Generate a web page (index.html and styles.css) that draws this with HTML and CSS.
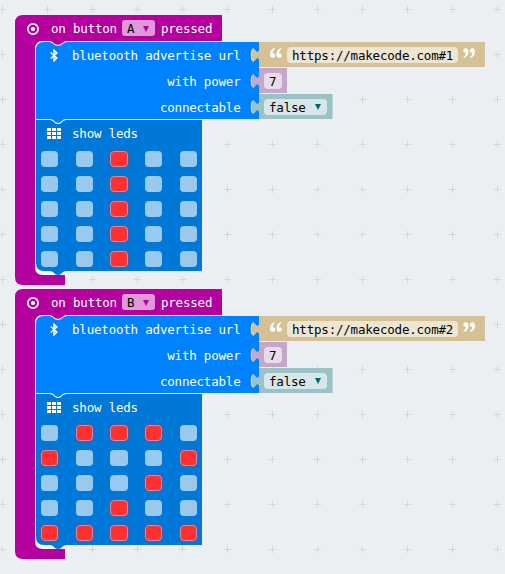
FILE: index.html
```
<!DOCTYPE html>
<html lang="en">
<head>
<meta charset="utf-8">
<title>Button blocks</title>
<link rel="stylesheet" href="styles.css">
</head>
<body>
<svg class="defs" width="0" height="0">
  <defs>
    <symbol id="shape" viewBox="0 0 250 270">
      <path fill="#f8fafb" d="M20 245V253Q20 261 28 261H43L36 255Z"/>
      <path fill="#b4009e" d="M8 0H207V26H52C48 26 47 30 43 30C39 30 38 26 34 26H28Q20 26 20 34V252Q20 260 28 260H50V270H8Q0 270 0 262V8Q0 0 8 0Z"/>
      <path fill="none" stroke="#f4e8f6" d="M20.500 252V34.500Q20.500 26.500 28.500 26.500H34C38 26.500 39 30.500 43 30.500C47 30.500 48 26.500 52 26.500H207"/>
      <path fill="#0082ff" d="M29 27H34C38 27 39 31 43 31C47 31 48 27 52 27H244V104H51C47 104 47 108 43 108C39 108 39 104 35 104H21V35Q21 27 29 27Z"/>
      <path fill="#0078d7" d="M21 105H35C39 105 39 109 43 109C47 109 47 105 51 105H187V256H51C47 256 47 260 43 260C39 260 39 256 35 256H29Q21 256 21 248Z"/>
      <path fill="none" stroke="#e5f2ff" d="M21 104.500H35C39 104.500 39 108.500 43 108.500C47 108.500 47 104.500 51 104.500H244"/>
    </symbol>
    <symbol id="target" viewBox="0 0 12 12">
      <circle cx="6" cy="6" r="5.150" fill="none" stroke="#fff" stroke-width="1.700"/>
      <circle cx="6" cy="6" r="2.100" fill="#fff"/>
    </symbol>
    <symbol id="bluetooth" viewBox="0 0 8 13">
      <path d="M.7 3.500 6.800 9 4 11.800V1.200L6.800 4 .7 9.500" fill="none" stroke="#fff" stroke-width="1.500"/>
    </symbol>
    <symbol id="matrix" viewBox="0 0 14 11">
      <path fill="#fff" d="M0 0h4v3H0zM5 0h4v3H5zM10 0h4v3h-4zM0 4h4v3H0zM5 4h4v3H5zM10 4h4v3h-4zM0 8h4v3H0zM5 8h4v3H5zM10 8h4v3h-4z"/>
    </symbol>
    <symbol id="plug" viewBox="0 0 9 14">
      <path fill="currentColor" d="M9 2.500L7 4Q5 1 3 .5Q1 2 1 7Q1 12 3 13.500Q5 13 7 10L9 11.500Z"/>
      <path fill="none" stroke="#fff" stroke-opacity=".6" d="M4 .8Q1.200 0 1.200 7Q1.200 14 4 13.200"/>
    </symbol>
    <symbol id="quote" viewBox="0 0 12 10">
      <path fill="#fff" d="M4.800 0C2 .7 0 3 0 6.200C0 8.500 1 9.800 2.800 9.800C4.200 9.800 5.200 8.900 5.200 7.400C5.200 6 4.200 5.100 2.700 5.200C2.600 3.500 3.500 1.800 5 .8ZM11.300 0C8.500 .7 6.500 3 6.500 6.200C6.500 8.500 7.500 9.800 9.300 9.800C10.700 9.800 11.700 8.900 11.700 7.400C11.700 6 10.700 5.100 9.200 5.200C9.100 3.500 10 1.800 11.500 .8Z"/>
    </symbol>
    <symbol id="arrow" viewBox="0 0 6 6"><path fill="currentColor" d="M0 0H6L3 6Z"/></symbol>
  </defs>
</svg>
<main class="workspace">
  <section class="event">
    <svg class="shape"><use href="#shape"/></svg>
    <header class="head">
      <svg class="target"><use href="#target"/></svg>
      <span>on button</span>
      <span class="pick">A<svg class="arrow"><use href="#arrow"/></svg></span>
      <span>pressed</span>
    </header>
    <div class="advertise">
      <div class="row">
        <div class="label"><svg class="bluetooth"><use href="#bluetooth"/></svg>bluetooth advertise url</div>
        <div class="value text"><svg class="plug"><use href="#plug"/></svg><svg class="quote"><use href="#quote"/></svg><span class="field">https://makecode.com#1</span><svg class="quote close"><use href="#quote"/></svg></div>
      </div>
      <div class="row">
        <div class="label">with power</div>
        <div class="value number"><svg class="plug"><use href="#plug"/></svg><span class="field">7</span></div>
      </div>
      <div class="row">
        <div class="label">connectable</div>
        <div class="value logic"><svg class="plug"><use href="#plug"/></svg><span class="field">false<svg class="arrow"><use href="#arrow"/></svg></span></div>
      </div>
    </div>
    <div class="show"><svg class="matrix"><use href="#matrix"/></svg>show leds</div>
    <div class="leds">
      <i></i><i></i><i class="on"></i><i></i><i></i>
      <i></i><i></i><i class="on"></i><i></i><i></i>
      <i></i><i></i><i class="on"></i><i></i><i></i>
      <i></i><i></i><i class="on"></i><i></i><i></i>
      <i></i><i></i><i class="on"></i><i></i><i></i>
    </div>
  </section>
  <section class="event">
    <svg class="shape"><use href="#shape"/></svg>
    <header class="head">
      <svg class="target"><use href="#target"/></svg>
      <span>on button</span>
      <span class="pick">B<svg class="arrow"><use href="#arrow"/></svg></span>
      <span>pressed</span>
    </header>
    <div class="advertise">
      <div class="row">
        <div class="label"><svg class="bluetooth"><use href="#bluetooth"/></svg>bluetooth advertise url</div>
        <div class="value text"><svg class="plug"><use href="#plug"/></svg><svg class="quote"><use href="#quote"/></svg><span class="field">https://makecode.com#2</span><svg class="quote close"><use href="#quote"/></svg></div>
      </div>
      <div class="row">
        <div class="label">with power</div>
        <div class="value number"><svg class="plug"><use href="#plug"/></svg><span class="field">7</span></div>
      </div>
      <div class="row">
        <div class="label">connectable</div>
        <div class="value logic"><svg class="plug"><use href="#plug"/></svg><span class="field">false<svg class="arrow"><use href="#arrow"/></svg></span></div>
      </div>
    </div>
    <div class="show"><svg class="matrix"><use href="#matrix"/></svg>show leds</div>
    <div class="leds">
      <i></i><i class="on"></i><i class="on"></i><i class="on"></i><i></i>
      <i class="on"></i><i></i><i></i><i></i><i class="on"></i>
      <i></i><i></i><i></i><i class="on"></i><i></i>
      <i></i><i></i><i class="on"></i><i></i><i></i>
      <i class="on"></i><i class="on"></i><i class="on"></i><i class="on"></i><i class="on"></i>
    </div>
  </section>
</main>
</body>
</html>
```
FILE: styles.css
```
* { box-sizing: border-box; }
body {
  margin: 0;
  background: #ebeff1;
  font: 12.5px/16px "DejaVu Sans Mono", "Liberation Mono", monospace;
  letter-spacing: -0.2px;
  color: #fff;
}
svg { display: block; flex: none; }
.defs { position: absolute; }
.workspace {
  height: 574px;
  padding: 15px 0 0 15px;
  overflow: hidden;
  background: url("data:image/svg+xml,%3Csvg xmlns='http://www.w3.org/2000/svg' width='45' height='45'%3E%3Cpath d='M0 9.500H6M2.500 6V13M44 9.500H45' stroke='%23d3d8da' fill='none'/%3E%3C/svg%3E");
}
.event { position: relative; z-index: 0; width: 475px; height: 270px; margin-bottom: 4px; }
.shape { position: absolute; left: 0; top: 0; width: 250px; height: 270px; z-index: -1; }
.head { display: flex; align-items: center; height: 26px; padding: 1px 0 0 12px; white-space: nowrap; }
.target { width: 12px; height: 12px; margin-right: 12px; }
.pick {
  display: flex;
  align-items: center;
  width: 33px;
  height: 16px;
  margin: -1px 6px 0 5px;
  padding: 1px 0 0 5px;
  border-radius: 3px;
  background: #e199d8;
  color: #000;
}
.arrow { width: 6px; height: 6px; }
.pick .arrow { margin-left: 9px; color: #b4009e; }
.advertise { display: grid; grid-template-rows: repeat(3, 25px); gap: 1px; margin: 1px 0 0 21px; }
.row { display: flex; height: 25px; }
.label { display: flex; align-items: center; justify-content: flex-end; width: 223px; padding: 2px 18.500px 0 0; white-space: nowrap; }
.bluetooth { width: 8px; height: 13px; margin-right: 14px; }
.value { position: relative; display: flex; align-items: center; height: 25px; }
.plug { position: absolute; left: -9px; top: 6px; width: 9px; height: 14px; }
.field { display: flex; align-items: center; height: 16px; padding: 2px 5px 0; border-radius: 4px; color: #000; white-space: nowrap; }
.text { width: 226px; padding-left: 11px; background: #d5c195; color: #d5c195; }
.text .field { width: 171px; margin: 0 5px; background: #eee6d5; }
.quote { width: 12px; height: 10px; margin-top: -4px; }
.close { transform: rotate(180deg); }
.number { width: 28px; padding-left: 5px; background: #c5a7ca; color: #c5a7ca; }
.number .field { width: 18px; background: #e8dcea; }
.logic { width: 74px; padding-left: 5px; background: #9ac2c7; color: #9ac2c7; border-right: 1px solid #b8d4d7; }
.logic .field { width: 63px; background: #d7e7e9; }
.logic .arrow { margin: -1px 0 0 9px; color: #006970; }
.show { display: flex; align-items: center; height: 27px; margin: 1px 0 0 32px; }
.matrix { width: 14px; height: 11px; margin-right: 11px; }
.leds { display: grid; grid-template-columns: repeat(5, 17.400px); grid-auto-rows: 16px; gap: 9px 17.270px; margin: 4px 0 0 26px; }
.leds i { border-radius: 4px; background: #99c9ef; }
.leds .on { background: #ff3030; border: 1px solid #c58fae; box-shadow: 0 0 3px rgba(255, 30, 40, .6); }
```
